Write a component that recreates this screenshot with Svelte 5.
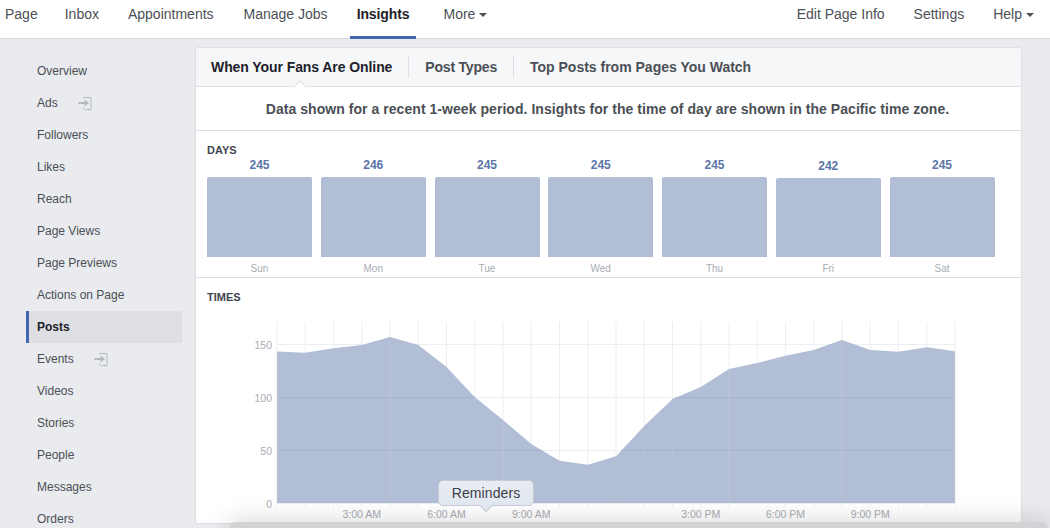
<script>
  const navLeft = ['Page', 'Inbox', 'Appointments', 'Manage Jobs', 'Insights', 'More']
  const navRight = ['Edit Page Info', 'Settings', 'Help']
  const side = [
    'Overview', 'Ads', 'Followers', 'Likes', 'Reach', 'Page Views', 'Page Previews',
    'Actions on Page', 'Posts', 'Events', 'Videos', 'Stories', 'People', 'Messages', 'Orders'
  ]
  const days = [
    { d: 'Sun', v: 245 }, { d: 'Mon', v: 246 }, { d: 'Tue', v: 245 }, { d: 'Wed', v: 245 },
    { d: 'Thu', v: 245 }, { d: 'Fri', v: 242 }, { d: 'Sat', v: 245 }
  ]

  // chart coordinates are relative to the svg, which starts at x=207 y=318 on the page
  const x0 = 70
  const step = 28.25
  const base = 186
  const ys = [352.6, 353.7, 349.3, 346, 338, 346, 368, 398, 421, 445, 461.7, 465.7, 457.3, 427,
    400, 388, 370, 364, 356.7, 351, 341, 351, 352.7, 348.3, 352.3]
  const xs = ys.map((_, i) => x0 + i * step)
  const area = `M${x0} ${base} ` + ys.map((y, i) => `L${xs[i]} ${y - 318}`).join(' ') + ` L${xs[24]} ${base} Z`
  const yTicks = [{ v: 150, y: 27 }, { v: 100, y: 80 }, { v: 50, y: 133 }, { v: 0, y: 186 }]
  const xLabels = [{ i: 3, t: '3:00 AM' }, { i: 6, t: '6:00 AM' }, { i: 9, t: '9:00 AM' },
    { i: 15, t: '3:00 PM' }, { i: 18, t: '6:00 PM' }, { i: 21, t: '9:00 PM' }]
</script>

<div class="page">
  <nav class="topnav">
    <div class="nav-group left">
      {#each navLeft as n}
        <span class="nav-item" class:active={n === 'Insights'}>
          {n}{#if n === 'More'}<i class="caret"></i>{/if}
        </span>
      {/each}
    </div>
    <div class="nav-group right">
      {#each navRight as n}
        <span class="nav-item">
          {n}{#if n === 'Help'}<i class="caret"></i>{/if}
        </span>
      {/each}
    </div>
  </nav>

  <div class="body">
    <aside class="sidebar">
      {#each side as s}
        <div class="side-item" class:selected={s === 'Posts'}>
          <span>{s}</span>
          {#if s === 'Ads' || s === 'Events'}
            <svg class="promo" width="14" height="14" viewBox="0 0 14 14">
              <path d="M5 1.500h8v12H7" fill="none" stroke="#b4b7bd" stroke-width="1" />
              <path d="M5.500 11.500v2" fill="none" stroke="#b4b7bd" stroke-width="1" />
              <path d="M0.500 6h6V3.500l4.500 3.500-4.500 3.500V8h-6z" fill="#b4b7bd" />
            </svg>
          {/if}
        </div>
      {/each}
    </aside>

    <main class="card">
      <div class="tabs">
        <span class="tab active">When Your Fans Are Online</span>
        <span class="tab short">Post Types</span>
        <span class="tab">Top Posts from Pages You Watch</span>
      </div>
      <div class="notice">Data shown for a recent 1-week period. Insights for the time of day are shown in the Pacific time zone.</div>

      <section class="days">
        <h4>DAYS</h4>
        <div class="bars">
          {#each days as b}
            <div class="col">
              <div class="val" class:low={b.v === 242}>{b.v}</div>
              <div class="bar-wrap">
                <div class="bar" style={`height: ${b.v === 242 ? 79 : 80}px`}></div>
              </div>
              <div class="day">{b.d}</div>
            </div>
          {/each}
        </div>
      </section>

      <section class="times">
        <h4>TIMES</h4>
        <svg class="chart" width="760" height="206" viewBox="0 0 760 206">
          <defs>
            <clipPath id="area-clip"><path d={area} /></clipPath>
          </defs>
          {#each yTicks as t}
            <line x1={x0} x2={xs[24]} y1={t.y + 0.5} y2={t.y + 0.5} stroke="#eceef1" />
            <text x="65" y={t.y + 5} text-anchor="end" class="tick">{t.v}</text>
          {/each}
          {#each xs as x}
            <line x1={x} x2={x} y1="5" y2="190" stroke="#eceef1" />
          {/each}
          <path d={area} fill="#b1bed6" />
          <g clip-path="url(#area-clip)">
            {#each yTicks.slice(1, 3) as t}
              <line x1={x0} x2={xs[24]} y1={t.y + 0.5} y2={t.y + 0.5} stroke="#a6b3cd" />
            {/each}
            {#each xs as x, i}
              <line x1={x} x2={x} y1="5" y2={base} stroke={i % 4 === 0 ? '#bdc4d3' : '#b5c1d8'} />
            {/each}
          </g>
          {#each xLabels as l}
            <text x={xs[l.i]} y="201" text-anchor="middle" class="tick">{l.t}</text>
          {/each}
        </svg>
      </section>
    </main>
  </div>

  <div class="dock"></div>
  <div class="tip">Reminders</div>
</div>

<style>
  :global(body) {
    margin: 0;
    background: #e9ebee;
    font-family: "Liberation Sans", Arial, sans-serif;
    overflow: hidden;
  }

  .page {
    position: relative;
    width: 1050px;
    height: 528px;
    overflow: hidden;
    color: #4b4f56;
  }

  .topnav {
    height: 38px;
    background: #fff;
    border-bottom: 1px solid #d9dbe0;
    display: flex;
    justify-content: space-between;
    font-size: 14px;
    color: #4b4f56;
  }

  .nav-group {
    display: flex;
  }

  .nav-group.left {
    padding-left: 5px;
  }

  .nav-group.left .nav-item:nth-child(2) {
    margin-left: 27px;
  }

  .nav-group.left .nav-item:nth-child(3) {
    margin-left: 29px;
  }

  .nav-group.left .nav-item:nth-child(4) {
    margin-left: 30px;
  }

  .nav-group.left .nav-item:nth-child(5) {
    margin-left: 29px;
  }

  .nav-group.left .nav-item:nth-child(6) {
    margin-left: 34px;
  }

  .nav-group.right {
    padding-right: 16px;
    gap: 29px;
  }

  .nav-item {
    height: 29px;
    line-height: 29px;
    white-space: nowrap;
    position: relative;
    display: block;
  }

  .nav-item.active {
    font-weight: bold;
    color: #1d2129;
    letter-spacing: -0.1px;
  }

  .nav-item.active::after {
    content: "";
    position: absolute;
    left: -7px;
    right: -6px;
    top: 36px;
    height: 3px;
    background: #4267b2;
  }

  .caret {
    display: inline-block;
    margin-left: 4px;
    vertical-align: 2px;
    border-left: 4px solid transparent;
    border-right: 4px solid transparent;
    border-top: 4px solid #4b4f56;
  }

  .body {
    display: flex;
    align-items: flex-start;
    padding-top: 8px;
  }

  .sidebar {
    width: 156px;
    margin: 8px 13px 0 26px;
    flex: none;
  }

  .side-item {
    height: 32px;
    line-height: 32px;
    font-size: 12px;
    color: #4b4f56;
    display: flex;
    align-items: center;
    border-left: 3px solid transparent;
    box-sizing: border-box;
    padding-left: 8px;
  }

  .side-item.selected {
    background: #dddfe2;
    border-left-color: #4267b2;
    font-weight: bold;
    color: #1d2129;
  }

  .promo {
    margin-left: 20px;
  }

  .card {
    width: 827px;
    height: 477px;
    flex: none;
    background: #fff;
    border: 1px solid #dddfe2;
    border-radius: 3px;
    box-sizing: border-box;
  }

  .tabs {
    height: 38px;
    background: #f6f7f9;
    border-bottom: 1px solid #dddfe2;
    border-radius: 3px 3px 0 0;
    display: flex;
    align-items: center;
    padding-left: 15px;
    font-size: 14px;
    font-weight: bold;
    color: #4b4f56;
  }

  .tab {
    position: relative;
    padding-right: 16px;
    margin-right: 16px;
    border-right: 1px solid #dddfe2;
    line-height: 22px;
    white-space: nowrap;
  }

  .tab:last-child {
    border-right: 0;
  }

  .tab.short {
    letter-spacing: -0.2px;
  }

  .tab.active {
    color: #1d2129;
    letter-spacing: -0.08px;
  }

  .tab.active::after {
    content: "";
    position: absolute;
    left: 84px;
    top: 26px;
    width: 9px;
    height: 9px;
    background: #fff;
    border-left: 1px solid #dddfe2;
    border-top: 1px solid #dddfe2;
    transform: rotate(45deg);
  }

  .notice {
    height: 43px;
    line-height: 44px;
    text-align: center;
    font-size: 14px;
    font-weight: bold;
    letter-spacing: 0.05px;
    padding-right: 2px;
    color: #4b4f56;
    border-bottom: 1px solid #dddfe2;
  }

  h4 {
    margin: 0;
    font-size: 11px;
    line-height: 13px;
    font-weight: bold;
    color: #3f4550;
  }

  .days {
    height: 147px;
    box-sizing: border-box;
    padding: 13px 0 0 11px;
    border-bottom: 1px solid #dddfe2;
  }

  .bars {
    display: flex;
    gap: 8.750px;
  }

  .col {
    width: 105px;
    flex: none;
    text-align: center;
  }

  .val {
    font-size: 12px;
    font-weight: bold;
    color: #5b75a8;
    line-height: 14px;
    padding-top: 1px;
    height: 14px;
  }

  .val.low {
    padding-top: 2px;
    height: 13px;
  }

  .bar-wrap {
    height: 80px;
    margin-top: 5px;
    display: flex;
    align-items: flex-end;
  }

  .bar {
    width: 100%;
    background: #b1bed6;
    border-radius: 2px 2px 0 0;
  }

  .day {
    font-size: 10px;
    color: #a8acb3;
    line-height: 12px;
    margin-top: 6px;
  }

  .times {
    padding: 13px 0 0 11px;
  }

  .chart {
    display: block;
    margin-top: 13px;
  }

  .tick {
    font-size: 10.500px;
    fill: #a8acb3;
  }

  .dock {
    position: absolute;
    left: 230px;
    right: 3px;
    top: 522px;
    height: 12px;
    background: #d3d3d6;
    border-radius: 5px 5px 0 0;
    box-shadow: 0 0 22px 3px rgba(0, 0, 0, 0.15);
  }

  .tip {
    position: absolute;
    left: 438px;
    top: 480px;
    width: 96px;
    height: 26px;
    box-sizing: border-box;
    line-height: 25px;
    text-align: center;
    font-size: 14px;
    letter-spacing: 0.1px;
    color: #3c4048;
    background: linear-gradient(#e8ecf3, #e1e7f0);
    border: 1px solid #c6cad2;
    border-radius: 5px;
  }

  .tip::after {
    content: "";
    position: absolute;
    left: 42px;
    top: 19px;
    width: 9px;
    height: 9px;
    background: #e2e8f0;
    border-right: 1px solid #c6cad2;
    border-bottom: 1px solid #c6cad2;
    transform: rotate(45deg);
  }
</style>
